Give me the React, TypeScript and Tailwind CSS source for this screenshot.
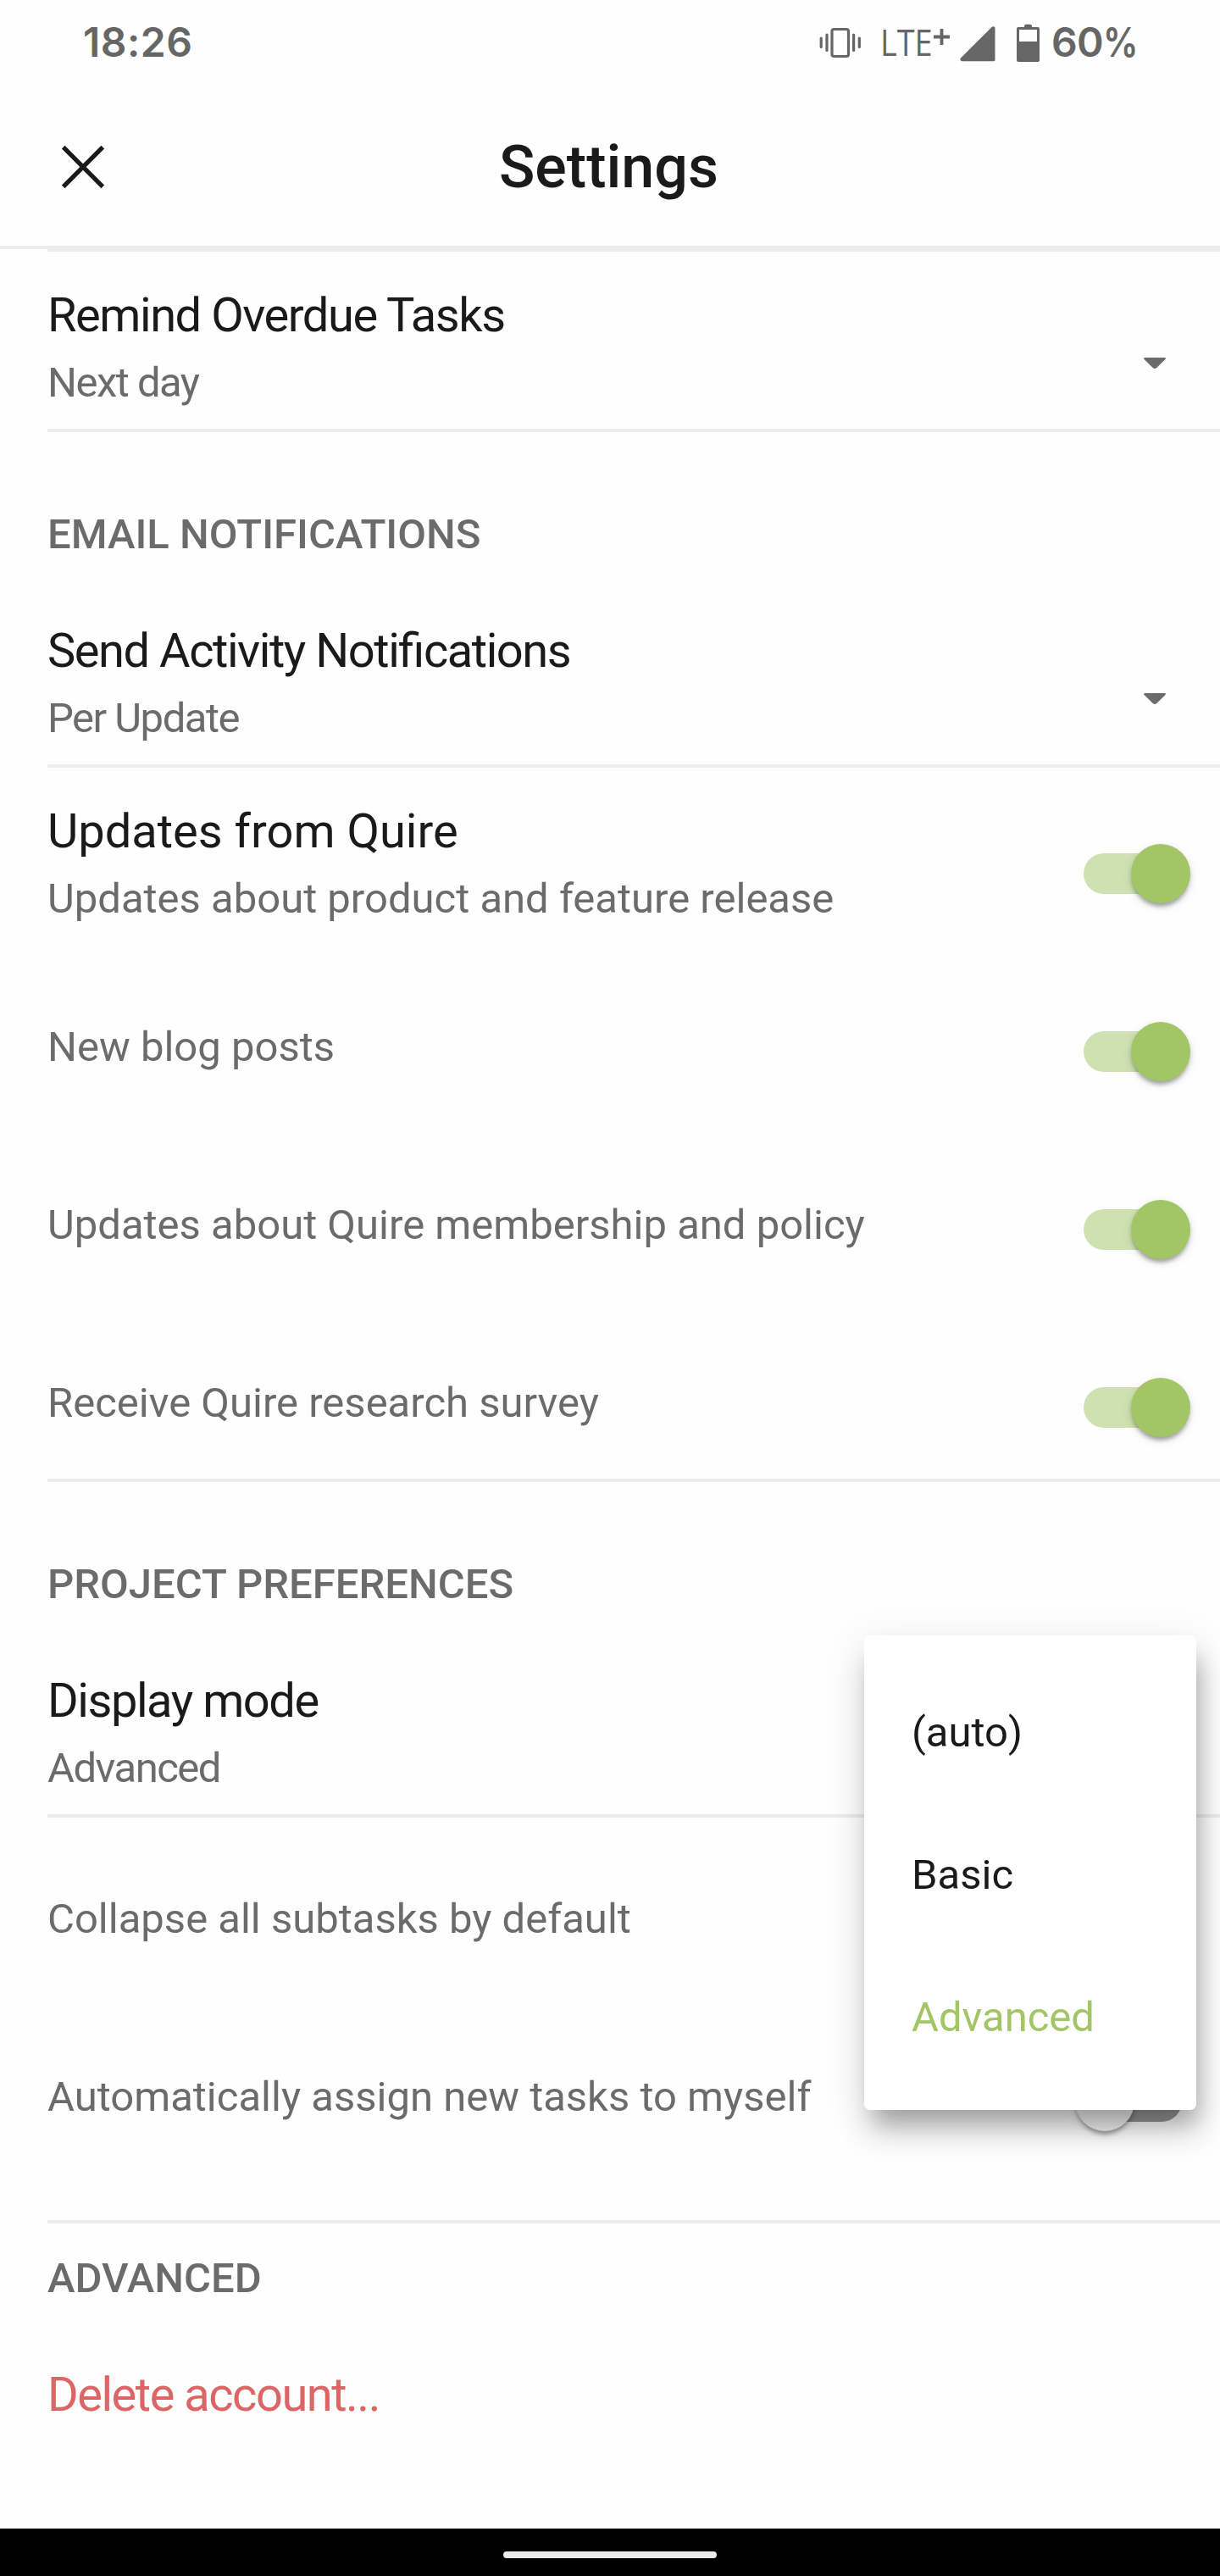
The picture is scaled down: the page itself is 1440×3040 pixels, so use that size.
import React from "react";

function StatusBar() {
  return (
    <div className="flex h-[100px] items-start justify-between pl-[98px] pr-[98px] pt-[22px] font-[Inter,sans-serif] text-[48px] font-semibold leading-[56px] text-[#666666]">
      <span className="tracking-[0.5px]">18:26</span>
      <div className="flex items-start">
        <svg className="mt-[10px] h-[38px] w-[50px]" viewBox="0 0 50 38" fill="none" stroke="currentColor" strokeLinecap="round">
          <rect x="15" y="2.5" width="19.5" height="32" rx="2.5" strokeWidth="3.2" />
          <path d="M2.2 13v10.500M9 9v18.500M40.600 9v18.500M47.300 13v10.500" strokeWidth="3.2" />
        </svg>
        <span className="ml-[22px] h-[56px] w-[60px] origin-left scale-x-[0.88] whitespace-nowrap font-['Open_Sans',sans-serif] text-[43px] font-normal">
          LTE
        </span>
        <svg className="ml-[3px] mt-[12px] h-[19px] w-[19px]" viewBox="0 0 19 19" fill="none" stroke="currentColor" strokeWidth="3.8">
          <path d="M9.500 0v19M0 9.500h19" />
        </svg>
        <svg className="ml-[12px] mt-[9px] h-[42px] w-[42px]" viewBox="0 0 42 42" fill="currentColor">
          <path d="M37.600 1C39 -0.500 41.500 0.300 41.500 2.400V39.200C41.500 40.500 40.700 41.300 39.400 41.300H2.600C0.600 41.300 -0.300 39 1 37.500Z" />
        </svg>
        <svg className="ml-[25px] mt-[6px] h-[45px] w-[27px]" viewBox="0 0 27 45" fill="currentColor" fillRule="evenodd">
          <path d="M9 4V3Q9 .8 11.200 .8H15.800Q18 .8 18 3V4H25Q27 4 27 6V43Q27 45 25 45H2Q0 45 0 43V6Q0 4 2 4ZM3 7V21H24V7Z" />
        </svg>
        <span className="ml-[14px] flex w-[101px] tracking-[-0.7px]">
          60<span className="inline-block origin-left scale-x-[0.86]">%</span>
        </span>
      </div>
    </div>
  );
}

function Header() {
  return (
    <header className="grid h-[190px] grid-cols-[200px_1fr_200px] items-start pt-[69px]">
      <button aria-label="Close" className="ml-[72px] mt-[2px] h-[52px] w-[52px]">
        <svg className="h-[52px] w-[52px]" viewBox="0 0 52 52" fill="none" stroke="#1a1a1a" strokeWidth="5.200">
          <path d="M2.700 2.700 49.300 49.300M49.300 2.700 2.700 49.300" />
        </svg>
      </button>
      <h1 className="pr-[3px] text-center text-[70px] font-medium leading-[56px] text-[#1a1a1a]">Settings</h1>
    </header>
  );
}

const Divider = () => <div className="ml-[56px] h-[4px] bg-[#ececec]" />;

function SelectRow({ title, value, className }: { title: string; value: string; className: string }) {
  return (
    <div className={`flex justify-between pl-[56px] pr-[64px] ${className}`}>
      <div className="leading-[56px]">
        <div className="text-[56px] tracking-[-1.45px] text-[#1a1a1a] [font-feature-settings:'liga']">{title}</div>
        <div className="mt-[24px] text-[49px] tracking-[-1.5px] text-[#6b6b6b]">{value}</div>
      </div>
      <svg className="mt-[78px] h-[14px] w-[26px]" viewBox="0 0 26 14" fill="#6b6b6b">
        <path d="M1 0H25Q26.500 .6 25.500 2L15.500 11.800Q13 14.300 10.500 11.800L.5 2Q-.5 .6 1 0Z" />
      </svg>
    </div>
  );
}

function Switch({ on }: { on: boolean }) {
  return (
    <div className="relative h-[70px] w-[136px] shrink-0">
      <div className={`absolute left-[10px] top-[11px] h-[48px] w-[116px] rounded-full ${on ? "bg-[#d0e1b1]" : "bg-[#9a9a9a]"}`} />
      <div
        className={`absolute top-0 size-[70px] rounded-full shadow-[0_7px_5px_-3.5px_rgba(0,0,0,0.2),0_3.5px_5px_0_rgba(0,0,0,0.14),0_3.5px_12px_0_rgba(0,0,0,0.12)] ${on ? "right-0 bg-[#a2c566]" : "left-0 bg-[#f5f5f5]"}`}
      />
    </div>
  );
}

function SwitchRow({ label, on, className }: { label: string; on: boolean; className: string }) {
  return (
    <div className={`flex items-start justify-between pl-[56px] pr-[35px] pt-[70px] ${className}`}>
      <span className="mt-[2px] text-[49px] leading-[56px] text-[#6b6b6b]">{label}</span>
      <Switch on={on} />
    </div>
  );
}

function SectionTitle({ children, className }: { children: React.ReactNode; className: string }) {
  return <h2 className={`pl-[56px] text-[49px] font-medium leading-[56px] text-[#6b6b6b] ${className}`}>{children}</h2>;
}

function ModeMenu() {
  return (
    <ul className="absolute right-[28px] top-[-49px] h-[560px] w-[392px] rounded-[7px] bg-white pt-[31px] text-[49px] leading-[168px] text-[#1a1a1a] shadow-[7px_21px_24px_-7px_rgba(0,0,0,0.22),4px_28px_38px_0_rgba(0,0,0,0.14),0_10px_50px_4px_rgba(0,0,0,0.08)]">
      <li className="pl-[56px]">(auto)</li>
      <li className="pl-[56px]">Basic</li>
      <li className="pl-[56px] text-[#a2c566]">Advanced</li>
    </ul>
  );
}

export default function App() {
  return (
    <div className="flex h-[3040px] w-[1440px] flex-col overflow-hidden bg-[#fefefe] font-[Roboto,sans-serif]">
      <StatusBar />
      <Header />
      <div className="h-[4px] bg-[#ececec]" />
      <div className="ml-[56px] h-[3px] bg-[#ececec]" />
      <SelectRow title="Remind Overdue Tasks" value="Next day" className="h-[209px] pt-[47px]" />
      <Divider />

      <SectionTitle className="pt-[93px]">EMAIL NOTIFICATIONS</SectionTitle>
      <SelectRow title="Send Activity Notifications" value="Per Update" className="h-[243px] pt-[81px]" />
      <Divider />
      <div className="flex h-[230px] items-start justify-between pl-[56px] pr-[35px]">
        <div className="pt-[47px] leading-[56px]">
          <div className="text-[56px] text-[#1a1a1a]">Updates from Quire</div>
          <div className="mt-[24px] text-[49px] text-[#6b6b6b]">Updates about product and feature release</div>
        </div>
        <div className="pt-[90px]">
          <Switch on />
        </div>
      </div>
      <SwitchRow label="New blog posts" on className="h-[210px]" />
      <SwitchRow label="Updates about Quire membership and policy" on className="h-[210px]" />
      <SwitchRow label="Receive Quire research survey" on className="h-[189px]" />
      <Divider />

      <SectionTitle className="pt-[93px]">PROJECT PREFERENCES</SectionTitle>
      <div className="relative z-10 h-0">
        <div className="absolute inset-x-0 top-[81px]">
          <ModeMenu />
        </div>
      </div>
      <SelectRow title="Display mode" value="Advanced" className="h-[243px] pt-[81px]" />
      <Divider />
      <SwitchRow label="Collapse all subtasks by default" on={false} className="mt-[20px] h-[210px]" />
      <SwitchRow label="Automatically assign new tasks to myself" on={false} className="h-[245px]" />
      <Divider />

      <SectionTitle className="pt-[37px]">ADVANCED</SectionTitle>
      <div className="h-[267px] pl-[56px] pt-[81px] text-[56px] leading-[56px] tracking-[-1.48px] text-[#dc6666]">
        Delete account...
      </div>

      <nav className="flex h-[56px] justify-center bg-black pt-[27px]">
        <div className="h-[8px] w-[252px] rounded-full bg-[#ebebeb]" />
      </nav>
    </div>
  );
}
